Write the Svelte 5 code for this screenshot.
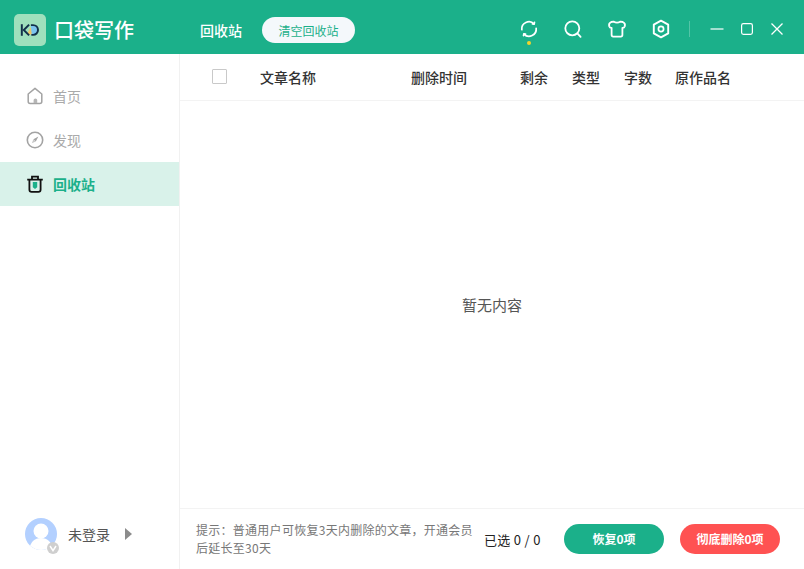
<script>
  const nav = [
    { key: 'home', label: '首页' },
    { key: 'discover', label: '发现' },
    { key: 'trash', label: '回收站', active: true }
  ];
  const columns = ['文章名称', '删除时间', '剩余', '类型', '字数', '原作品名'];
  let selected = 0;
  let total = 0;
</script>

<div class="window">
  <header class="topbar">
    <div class="brand">
      <div class="logo">
        <svg width="22" height="16" viewBox="0 0 24 18" fill="none">
          <path d="M12.5 6 L8.5 14 L15 14 Z" fill="#e9c46a" />
          <path d="M13 3.5 h2.5 a5.5 5.5 0 0 1 0 11 h-1.5 Z" fill="#7cc4ee" />
          <path d="M2.8 2.5 v13" stroke="#12304a" stroke-width="2.2" />
          <path d="M11 3 L5 9 L11 15" stroke="#12304a" stroke-width="2.2" />
          <path d="M13 3.5 h2.5 a5.5 5.5 0 0 1 0 11 h-2" stroke="#12304a" stroke-width="2.2" />
        </svg>
      </div>
      <span class="brand-name">口袋写作</span>
    </div>
    <span class="page-title">回收站</span>
    <button class="clear-btn">清空回收站</button>

    <div class="tools">
      <div class="tool sync">
        <svg width="20" height="20" viewBox="-1 -1 22 22" fill="none" stroke="#fff" stroke-width="1.9" stroke-linecap="round" stroke-linejoin="round">
          <path d="M2.1 10.8 A7.9 7.9 0 0 1 15.6 4.4" />
          <path d="M17.9 9.2 A7.9 7.9 0 0 1 4.4 15.6" />
          <path d="M16 2.8 L15.6 4.6 L13.8 4.3" />
          <path d="M4 17.2 L4.4 15.4 L6.2 15.7" />
        </svg>
        <i class="dot"></i>
      </div>
      <div class="tool">
        <svg width="20" height="20" viewBox="0 0 20 20" fill="none" stroke="#fff" stroke-width="1.8" stroke-linecap="round">
          <circle cx="9.3" cy="9.3" r="7" />
          <path d="M14.6 14.6 L17.6 17.8" />
        </svg>
      </div>
      <div class="tool">
        <svg width="20" height="20" viewBox="0 0 20 20" fill="none" stroke="#fff" stroke-width="1.8" stroke-linejoin="round">
          <path d="M6.5 2.6 Q10 4.8 13.5 2.6 L15.8 3 Q18.6 4.2 17.8 7.2 Q17.2 9 15.4 8.8 V15.8 Q15.4 17.6 13.8 17.6 H6.2 Q4.6 17.6 4.6 15.8 V8.8 Q2.8 9 2.2 7.2 Q1.4 4.2 4.2 3 Z" />
        </svg>
      </div>
      <div class="tool">
        <svg width="20" height="20" viewBox="0 0 20 20" fill="none" stroke="#fff">
          <path d="M10 1.6 L17.2 5.6 V14.4 L10 18.4 L2.8 14.4 V5.6 Z" stroke-width="1.9" stroke-linejoin="round" />
          <circle cx="10" cy="10" r="2.6" stroke-width="1.7" />
        </svg>
      </div>
      <span class="divider"></span>
      <div class="win-controls">
        <svg width="14" height="14" viewBox="0 0 14 14" stroke="#fff" stroke-width="1.2" fill="none"><path d="M0.5 7 H13.5" /></svg>
        <svg width="14" height="14" viewBox="0 0 14 14" stroke="#fff" stroke-width="1.2" fill="none"><rect x="1.6" y="1.6" width="10.8" height="10.8" rx="1.8" /></svg>
        <svg width="14" height="14" viewBox="0 0 14 14" stroke="#fff" stroke-width="1.3" fill="none"><path d="M1.5 1.5 L12.5 12.5 M12.5 1.5 L1.5 12.5" /></svg>
      </div>
    </div>
  </header>

  <div class="body">
    <aside class="sidebar">
      <nav>
        {#each nav as item}
          <div class="nav-item" class:active={item.active}>
            {#if item.key === 'home'}
              <svg width="18" height="18" viewBox="0 0 18 18" fill="none">
                <path d="M2.2 7 L9 1.4 L15.8 7 V14.4 Q15.8 16.4 13.8 16.4 H4.2 Q2.2 16.4 2.2 14.4 Z" stroke="#a3a3a3" stroke-width="1.5" stroke-linejoin="round" />
                <path d="M7.6 16 V13 Q7.6 11.4 9.4 11.4 Q11.2 11.4 11.2 13 V16 Z" fill="#b5b5b5" />
              </svg>
            {:else if item.key === 'discover'}
              <svg width="18" height="18" viewBox="0 0 18 18" fill="none">
                <circle cx="9" cy="9" r="7.7" stroke="#a3a3a3" stroke-width="1.6" />
                <path d="M12.4 5.6 L9.8 10.6 L7.4 8.2 Z" fill="#a3a3a3" />
                <path d="M7.4 8.2 L9.8 10.6 L5.8 12.2 Z" fill="#c8c8c8" />
              </svg>
            {:else}
              <svg width="18" height="18" viewBox="0 0 18 18" fill="none">
                <path d="M1.2 4.6 H16.8 M6 4.2 V1.6 H12 V4.2" stroke="#111" stroke-width="1.8" />
                <path d="M3.4 4.6 V14.4 Q3.4 16.8 5.6 16.8 H12.4 Q14.6 16.8 14.6 14.4 V4.6" stroke="#111" stroke-width="1.8" />
                <path d="M6.8 7 H11.2 V12.2 L9 14 L6.8 12.2 Z" fill="#1bb08a" />
              </svg>
            {/if}
            <span>{item.label}</span>
          </div>
        {/each}
      </nav>

      <div class="account">
        <div class="avatar">
          <svg width="32" height="32" viewBox="0 0 32 32">
            <defs>
              <clipPath id="avatar-clip"><circle cx="16" cy="16" r="16" /></clipPath>
            </defs>
            <g clip-path="url(#avatar-clip)">
              <rect width="32" height="32" fill="#b3d0ff" />
              <circle cx="16" cy="13" r="7.5" fill="#fff" />
              <path d="M4 32 Q6 20 16 20 Q26 20 28 32 Z" fill="#fff" />
            </g>
          </svg>
          <span class="badge">
            <svg width="8" height="7" viewBox="0 0 8 7" fill="none" stroke="#fff" stroke-width="1.5"><path d="M1 1 L4 5.6 L7 1" /></svg>
          </span>
        </div>
        <span class="account-name">未登录</span>
        <i class="caret"></i>
      </div>
    </aside>

    <main class="content">
      <div class="table-head">
        <span class="check-cell"><span class="checkbox"></span></span>
        {#each columns as col}
          <span>{col}</span>
        {/each}
      </div>

      <div class="empty">暂无内容</div>

      <footer class="footer">
        <p class="tip">提示：普通用户可恢复3天内删除的文章，开通会员后延长至30天</p>
        <span class="count">已选 {selected} / {total}</span>
        <button class="action restore">恢复0项</button>
        <button class="action purge">彻底删除0项</button>
      </footer>
    </main>
  </div>
</div>

<style>
  :global(body) {
    margin: 0;
    background: #fff;
  }
  .window {
    display: flex;
    flex-direction: column;
    height: 100vh;
    overflow: hidden;
    font-family: "Noto Sans CJK SC", "Liberation Sans", sans-serif;
    color: #333;
  }
  .topbar {
    flex: 0 0 54px;
    box-sizing: border-box;
    display: flex;
    align-items: center;
    background: #1bb08a;
    color: #fff;
    padding: 6px 0 0 14px;
  }
  .brand {
    display: flex;
    align-items: center;
    width: 186px;
  }
  .logo {
    width: 32px;
    height: 32px;
    border-radius: 5px;
    background: #9fe0bd;
    display: flex;
    align-items: center;
    justify-content: center;
  }
  .brand-name {
    margin-left: 8px;
    font-size: 20px;
    font-weight: 500;
    margin-top: -2px;
  }
  .page-title {
    font-size: 14px;
    font-weight: 500;
  }
  .clear-btn {
    margin-left: 20px;
    width: 93px;
    height: 26px;
    border: none;
    border-radius: 13px;
    background: #f4f8fb;
    color: #1bb08a;
    font: inherit;
    font-size: 12px;
    padding: 0;
  }
  .tools {
    margin-left: auto;
    margin-top: -2px;
    display: flex;
    align-items: center;
    padding-right: 20px;
  }
  .tool {
    position: relative;
    width: 20px;
    height: 20px;
    margin-right: 24px;
  }
  .tool svg {
    display: block;
  }
  .dot {
    position: absolute;
    left: 8px;
    top: 22px;
    width: 4px;
    height: 4px;
    border-radius: 50%;
    background: #f2d32c;
  }
  .divider {
    width: 1px;
    height: 16px;
    background: rgba(255, 255, 255, 0.25);
    margin: 0 20px 0 -6px;
  }
  .win-controls {
    display: flex;
    gap: 16px;
  }
  .body {
    flex: 1;
    display: flex;
    min-height: 0;
  }
  .sidebar {
    flex: 0 0 179px;
    border-right: 1px solid #f1f1f1;
    display: flex;
    flex-direction: column;
    padding-top: 20px;
    padding-bottom: 19px;
  }
  .nav-item {
    height: 44px;
    display: flex;
    align-items: center;
    gap: 9px;
    padding-left: 26px;
    font-size: 14px;
    color: #aaa;
  }
  .nav-item.active {
    background: #d9f2ea;
    color: #1bb08a;
    font-weight: 700;
  }
  .account {
    margin-top: auto;
    display: flex;
    align-items: center;
    padding-left: 25px;
  }
  .avatar {
    position: relative;
    width: 32px;
    height: 32px;
  }
  .avatar > svg {
    display: block;
  }
  .badge {
    position: absolute;
    right: -2px;
    bottom: -4px;
    width: 12px;
    height: 12px;
    border-radius: 50%;
    background: #cfcfcf;
    display: flex;
    align-items: center;
    justify-content: center;
  }
  .account-name {
    margin-left: 11px;
    font-size: 14px;
    color: #555;
  }
  .caret {
    margin-left: 15px;
    border-left: 7px solid #8c8c8c;
    border-top: 6px solid transparent;
    border-bottom: 6px solid transparent;
  }
  .content {
    flex: 1;
    min-width: 0;
    display: flex;
    flex-direction: column;
  }
  .table-head {
    flex: 0 0 46px;
    display: grid;
    grid-template-columns: 80px 151px 109px 52px 52px 51px 1fr;
    align-items: center;
    border-bottom: 1px solid #f3f3f3;
    font-size: 14px;
    font-weight: 500;
    color: #333;
  }
  .check-cell {
    padding-left: 32px;
    display: flex;
  }
  .checkbox {
    width: 13px;
    height: 13px;
    border: 1px solid #c9c9c9;
    border-radius: 1px;
    margin-top: -1px;
  }
  .empty {
    flex: 1;
    display: flex;
    align-items: center;
    justify-content: center;
    font-size: 15px;
    color: #555;
  }
  .footer {
    flex: 0 0 60px;
    display: flex;
    align-items: center;
    border-top: 1px solid #f3f3f3;
    padding-left: 16px;
  }
  .tip {
    width: 280px;
    margin: 0;
    font-size: 12px;
    line-height: 18px;
    letter-spacing: 0.27px;
    color: #777;
  }
  .count {
    margin-left: 8px;
    width: 80px;
    font-size: 13px;
    letter-spacing: 0.3px;
    color: #222;
  }
  .action {
    width: 100px;
    height: 30px;
    border: none;
    border-radius: 15px;
    color: #fff;
    font: inherit;
    font-size: 12px;
    font-weight: 700;
    padding: 0 0 2px;
  }
  .restore {
    background: #1bb08a;
  }
  .purge {
    margin-left: 16px;
    background: #ff5252;
  }
</style>
